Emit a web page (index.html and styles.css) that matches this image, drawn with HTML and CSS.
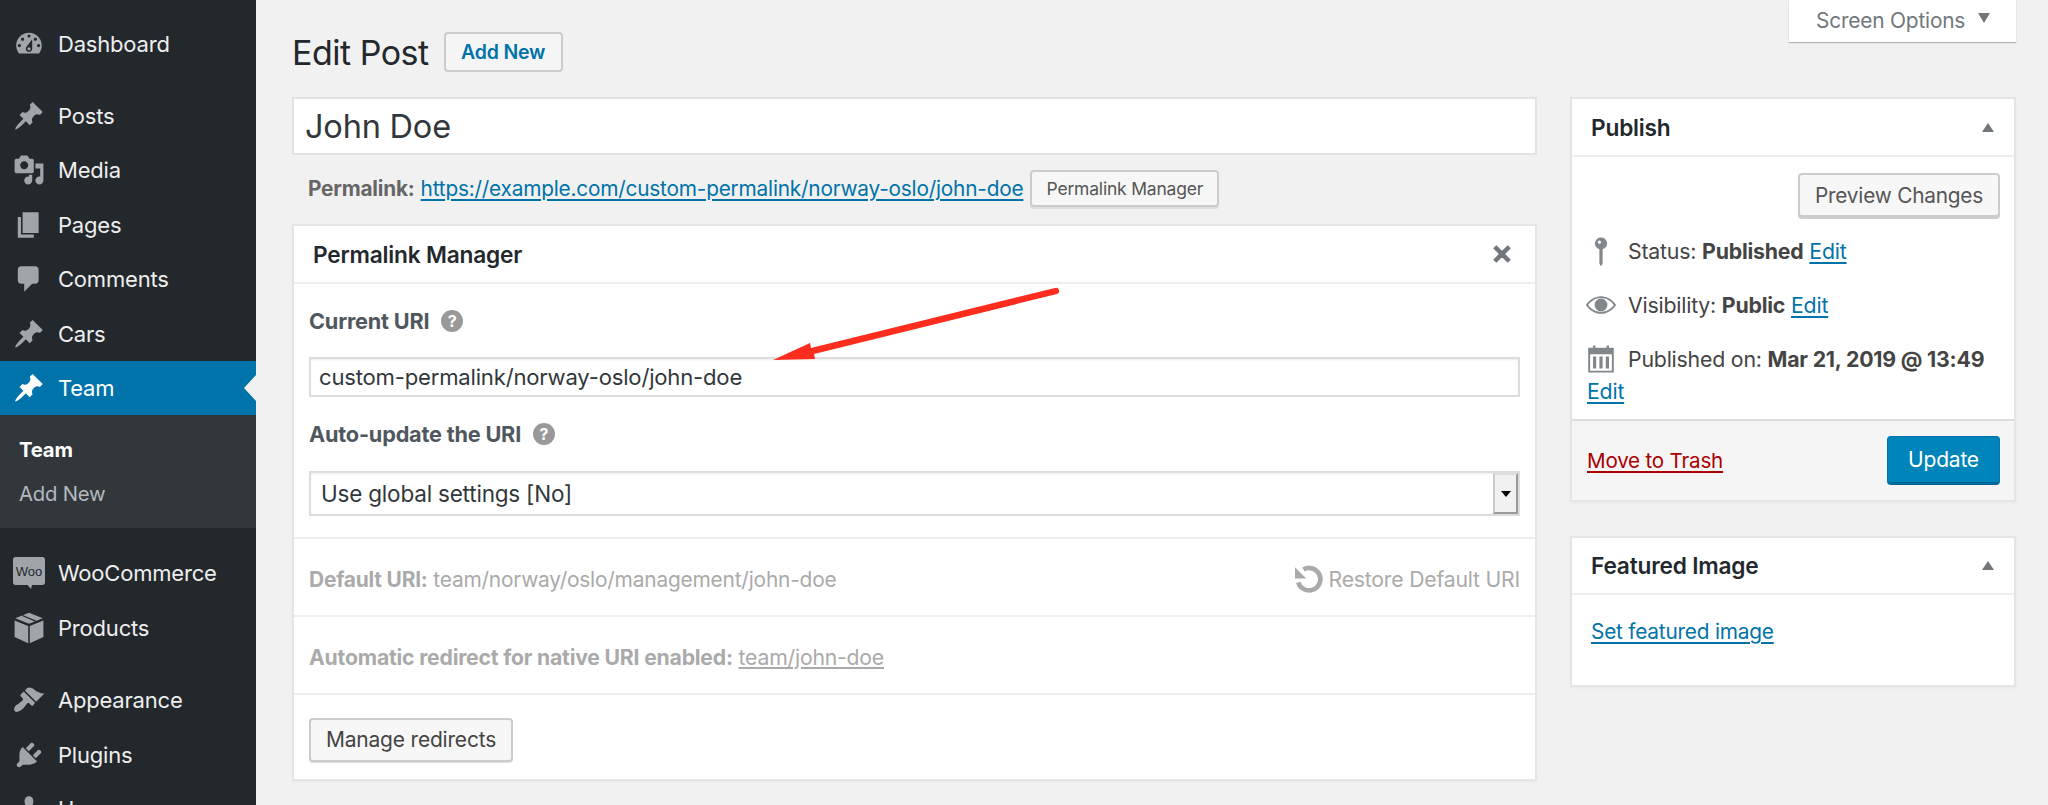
FILE: index.html
```html
<!DOCTYPE html>
<html lang="en">
<head>
<meta charset="utf-8">
<title>Edit Post</title>
<link rel="stylesheet" href="styles.css">
</head>
<body>
<div class="shell">
  <nav class="sidebar">
    <a class="item"><span class="ic"><svg viewBox="0 0 20 20"><path fill-rule="evenodd" d="M3.76 16h12.48c1.1-1.37 1.76-3.11 1.76-5 0-4.42-3.58-8-8-8s-8 3.58-8 8c0 1.89.66 3.63 1.76 5zM10 4c.55 0 1 .45 1 1s-.45 1-1 1-1-.45-1-1 .45-1 1-1zM6 6c.55 0 1 .45 1 1s-.45 1-1 1-1-.45-1-1 .45-1 1-1zm8 0c.55 0 1 .45 1 1s-.45 1-1 1-1-.45-1-1 .45-1 1-1zm-5.37 5.55L12 7v6c0 1.1-.9 2-2 2s-2-.9-2-2c0-.57.24-1.08.63-1.45zM4 10c.55 0 1 .45 1 1s-.45 1-1 1-1-.45-1-1 .45-1 1-1zm12 0c.55 0 1 .45 1 1s-.45 1-1 1-1-.45-1-1 .45-1 1-1zm-5 3c0-.55-.45-1-1-1s-1 .45-1 1 .45 1 1 1 1-.45 1-1z"/></svg></span>Dashboard</a>
    <div class="sep"></div>
    <a class="item"><span class="ic"><svg viewBox="0 0 20 20"><path d="M10.44 3.02l1.82-1.82 6.36 6.35-1.83 1.82c-1.05-.68-2.48-.57-3.41.36l-.75.75c-.92.93-1.04 2.35-.35 3.41l-1.83 1.82-2.41-2.41-2.8 2.79c-.42.42-3.38 2.71-3.8 2.29s1.86-3.39 2.28-3.81l2.79-2.79L4.1 9.36l1.83-1.82c1.05.69 2.48.57 3.4-.36l.75-.75c.93-.92 1.05-2.35.36-3.41z"/></svg></span>Posts</a>
    <a class="item"><span class="ic"><svg viewBox="0 0 20 20"><path fill-rule="evenodd" d="M13 11V4c0-.55-.45-1-1-1h-1.67L9 1H5L3.67 3H2c-.55 0-1 .45-1 1v7c0 .55.45 1 1 1h10c.55 0 1-.45 1-1zM7 4.5c1.38 0 2.5 1.12 2.5 2.5S8.38 9.5 7 9.5 4.5 8.38 4.5 7 5.62 4.5 7 4.5zM14 6h5v10.5c0 1.38-1.12 2.5-2.5 2.5S14 17.88 14 16.5s1.12-2.5 2.5-2.5c.17 0 .34.02.5.05V9h-3V6zm-4 8.05V13h2v3.5c0 1.38-1.12 2.5-2.5 2.5S7 17.88 7 16.5 8.12 14 9.5 14c.17 0 .34.02.5.05z"/></svg></span>Media</a>
    <a class="item"><span class="ic"><svg viewBox="0 0 20 20"><path d="M6 15V2h10v13H6zm-1 1h8v2H3V5h2v11z"/></svg></span>Pages</a>
    <a class="item"><span class="ic"><svg viewBox="0 0 20 20"><path d="M5 2h9c1.1 0 2 .9 2 2v7c0 1.1-.9 2-2 2h-2l-5 5v-5H5c-1.1 0-2-.9-2-2V4c0-1.1.9-2 2-2z"/></svg></span>Comments</a>
    <a class="item"><span class="ic"><svg viewBox="0 0 20 20"><path d="M10.44 3.02l1.82-1.82 6.36 6.35-1.83 1.82c-1.05-.68-2.48-.57-3.41.36l-.75.75c-.92.93-1.04 2.35-.35 3.41l-1.83 1.82-2.41-2.41-2.8 2.79c-.42.42-3.38 2.71-3.8 2.29s1.86-3.39 2.28-3.81l2.79-2.79L4.1 9.36l1.83-1.82c1.05.69 2.48.57 3.4-.36l.75-.75c.93-.92 1.05-2.35.36-3.41z"/></svg></span>Cars</a>
    <a class="item active"><span class="ic"><svg viewBox="0 0 20 20"><path d="M10.44 3.02l1.82-1.82 6.36 6.35-1.83 1.82c-1.05-.68-2.48-.57-3.41.36l-.75.75c-.92.93-1.04 2.35-.35 3.41l-1.83 1.82-2.41-2.41-2.8 2.79c-.42.42-3.38 2.71-3.8 2.29s1.86-3.39 2.28-3.81l2.79-2.79L4.1 9.36l1.83-1.82c1.05.69 2.48.57 3.4-.36l.75-.75c.93-.92 1.05-2.35.36-3.41z"/></svg></span>Team</a>
    <div class="submenu">
      <a class="subitem current">Team</a>
      <a class="subitem">Add New</a>
    </div>
    <div class="sep"></div>
    <a class="item"><span class="ic"><svg viewBox="0 0 32 32"><path d="M2.500 0h27c1.400 0 2.500 1.100 2.500 2.500v23c0 1.400-1.100 2.500-2.500 2.500H19l-1 4-3.500-4H2.500C1.100 28 0 26.900 0 25.500v-23C0 1.100 1.100 0 2.500 0z"/><text class="wootext" x="16" y="18.500" text-anchor="middle">Woo</text></svg></span>WooCommerce</a>
    <a class="item"><span class="ic"><svg viewBox="0 0 20 20"><path d="M10 .4l8.600 3.500L10 7.400 1.400 3.900z"/><path class="tape" d="M5.800 2.200l8.400 3.500"/><path d="M1 5.300l8.500 3.400V19.600L1 15.700zM19 5.300l-8.500 3.400V19.600l8.500-3.900z"/></svg></span>Products</a>
    <div class="sep"></div>
    <a class="item"><span class="ic"><svg viewBox="0 0 20 20"><path d="M14.480 11.060L7.410 3.990l1.500-1.500c.5-.56 2.300-.47 3.510.32 1.210.8 1.430 1.280 2.910 2.100 1.180.64 2.450 1.260 4.450.85zm-.71.71L6.700 4.700 4.930 6.470c-.39.39-.39 1.020 0 1.410l1.060 1.060c.39.39.39 1.030 0 1.420-.6.6-1.430 1.110-2.210 1.690-.35.26-.7.53-1.010.84C1.430 13.230 0 15.840 1.150 17c1.160 1.160 3.770-.27 5.140-1.610.31-.31.58-.66.84-1.010.58-.78 1.090-1.610 1.690-2.210.39-.39 1.030-.39 1.420 0l1.060 1.060c.39.39 1.020.39 1.410 0z"/></svg></span>Appearance</a>
    <a class="item"><span class="ic"><svg viewBox="0 0 20 20"><path d="M13.110 4.360L9.870 7.600 8 5.730l3.240-3.240c.35-.34 1.050-.2 1.560.32.520.51.660 1.210.310 1.550zm-8 1.770l.91-1.120 9.010 9.010-1.190.84c-.71.710-2.630 1.160-3.820 1.160H6.140L4.900 17.260c-.59.590-1.540.59-2.120 0-.59-.58-.59-1.530 0-2.120l1.240-1.240v-3.880c0-1.130.4-3.190 1.090-3.890zm7.260 3.970l3.240-3.240c.34-.35 1.040-.21 1.550.31.520.51.660 1.210.310 1.550l-3.240 3.250z"/></svg></span>Plugins</a>
    <a class="item"><span class="ic"><svg viewBox="0 0 20 20"><path d="M10 9.250c-2.270 0-2.730-3.440-2.730-3.440C7 4.020 7.820 2 9.970 2c2.160 0 2.980 2.020 2.710 3.810 0 0-.41 3.440-2.680 3.440zm0 2.570L12.720 10c2.390 0 4.520 2.330 4.520 4.530v2.490s-3.650 1.130-7.240 1.130c-3.650 0-7.240-1.130-7.240-1.130v-2.490c0-2.250 1.940-4.480 4.470-4.480z"/></svg></span>Users</a>
  </nav>

  <main class="content">
    <section class="col-main">
      <div class="head">
        <h1>Edit Post</h1>
        <a class="btn addnew">Add New</a>
      </div>
      <div class="title">John Doe</div>
      <div class="permalink">
        <strong>Permalink:</strong>
        <a class="link">https://example.com/custom-permalink/norway-oslo/john-doe</a>
        <a class="btn pmbtn">Permalink Manager</a>
      </div>
      <div class="box manager">
        <div class="box-head">
          <h2>Permalink Manager</h2>
          <svg class="close" viewBox="0 0 20 20"><path d="M14.950 6.460L11.410 10l3.540 3.540-1.410 1.410L10 11.420l-3.530 3.530-1.420-1.420L8.580 10 5.050 6.470l1.420-1.420L10 8.580l3.540-3.530z"/></svg>
        </div>
        <div class="fields">
          <div class="label">Current URI <span class="help">?</span></div>
          <div class="field">custom-permalink/norway-oslo/john-doe</div>
          <div class="label second">Auto-update the URI <span class="help">?</span></div>
          <div class="field select">
            <span class="select-text">Use global settings [No]</span>
            <span class="select-btn"><i class="caret"></i></span>
          </div>
        </div>
        <div class="row faded spread">
          <span><b>Default URI:</b> team/norway/oslo/management/john-doe</span>
          <span class="restore"><svg viewBox="0 0 32 32"><path class="ring" d="M9 5.800A12 12 0 1 1 3.500 19.500"/><path class="head-tri" d="M0 3.500V15.500H12z"/></svg>Restore Default URI</span>
        </div>
        <div class="row faded">
          <span><b>Automatic redirect for native URI enabled:</b> <u>team/john-doe</u></span>
        </div>
        <div class="row last">
          <a class="btn manage">Manage redirects</a>
        </div>
      </div>
    </section>

    <aside class="col-side">
      <div class="screen-tab">Screen Options <i class="tab-caret"></i></div>
      <div class="box publish">
        <div class="box-head side">
          <h2>Publish</h2>
          <i class="toggle"></i>
        </div>
        <div class="actions"><a class="btn preview">Preview Changes</a></div>
        <div class="meta">
          <span class="mi"><svg viewBox="0 0 20 20"><path d="M10 1.500a3.800 3.800 0 0 1 1 7.470V18l-1 1.500L9 18V8.970A3.800 3.800 0 0 1 10 1.500zM9 3.500a1 1 0 1 0 0 2 1 1 0 0 0 0-2z" fill-rule="evenodd"/></svg></span>Status: <b>Published</b> <a class="link">Edit</a>
        </div>
        <div class="meta">
          <span class="mi"><svg viewBox="0 0 20 20"><path fill-rule="evenodd" d="M10 4.500c4 0 7.300 2.300 9.500 5.500-2.200 3.200-5.500 5.500-9.500 5.500S2.700 13.200.5 10C2.700 6.800 6 4.500 10 4.500zM10 5.700c-3.300 0-6.100 1.800-8 4.300 1.900 2.500 4.700 4.300 8 4.300s6.100-1.800 8-4.300c-1.900-2.500-4.700-4.300-8-4.300zM10 6a4 4 0 1 1 0 8 4 4 0 0 1 0-8z"/></svg></span>Visibility: <b>Public</b> <a class="link">Edit</a>
        </div>
        <div class="meta">
          <span class="mi"><svg viewBox="0 0 20 20"><path fill-rule="evenodd" d="M5 1.500h1.500V3h7V1.500H15V3h3v15.500H2V3h3zM3.200 7v10.300h13.600V7zM5 8.500h2V16H5zM9 8.500h2V16H9zM13 8.500h2V16h-2z"/></svg></span>Published on: <b>Mar 21, 2019 @ 13:49</b> <a class="link">Edit</a>
        </div>
        <div class="pub-foot">
          <a class="trash">Move to Trash</a>
          <a class="btn primary">Update</a>
        </div>
      </div>
      <div class="box featured">
        <div class="box-head side short">
          <h2>Featured Image</h2>
          <i class="toggle"></i>
        </div>
        <div class="feat-body"><a class="link">Set featured image</a></div>
      </div>
    </aside>
  </main>
</div>
<svg class="arrow" viewBox="0 0 2048 805"><path d="M773 360L810 343L811 348L1055 288a3 3 0 0 1 2 6L814 354L815 359Z"/></svg>
</body>
</html>
```
FILE: styles.css
```css
* { box-sizing: border-box; }
html, body { margin: 0; height: 100%; overflow: hidden; }
body {
  background: #f1f1f1;
  color: #444;
  font-family: Inter, "Liberation Sans", sans-serif;
  font-size: 20.900px;
  letter-spacing: -0.2px;
}
a { color: inherit; text-decoration: none; }
h1, h2 { margin: 0; }

.shell { display: flex; height: 805px; }

/* Sidebar */
.sidebar {
  width: 256px;
  flex: none;
  height: 805px;
  overflow: hidden;
  padding-top: 16.500px;
  background: #23282d;
  color: #eee;
  font-size: 22px;
}
.item {
  position: relative;
  display: flex;
  align-items: center;
  height: 54.400px;
}
.ic {
  width: 58px;
  flex: none;
  display: flex;
  justify-content: center;
}
.ic svg { width: 32px; height: 32px; fill: #a0a5aa; display: block; }
.wootext { font: 400 13px "Liberation Sans", sans-serif; fill: #23282d; letter-spacing: 0; }
.tape { fill: none; stroke: #23282d; stroke-width: .8; }
.sep { height: 18px; }
.active { background: #0073aa; color: #fff; }
.active .ic svg { fill: #fff; }
.active::after {
  content: "";
  position: absolute;
  right: 0;
  top: 50%;
  margin-top: -13px;
  border: 13px solid transparent;
  border-left: 0;
  border-right: 12px solid #f1f1f1;
}
.submenu {
  background: #32373c;
  height: 113px;
  padding-top: 12px;
}
.subitem {
  display: flex;
  align-items: center;
  height: 44px;
  padding-left: 19px;
  font-size: 20.300px;
  color: #b4b9be;
}
.current { color: #fff; font-weight: 700; }

/* Main layout */
.content {
  flex: 1;
  display: flex;
  gap: 33px;
  padding: 0 32px 0 36px;
}
.col-main { width: 1245px; flex: none; }
.col-side { width: 446px; flex: none; }

.head {
  display: flex;
  align-items: center;
  height: 97px;
  padding-top: 32px;
  padding-bottom: 25px;
  gap: 15px;
}
h1 {
  font-size: 34px;
  font-weight: 400;
  color: #23282d;
  letter-spacing: -0.5px;
}
.btn {
  display: inline-flex;
  align-items: center;
  justify-content: center;
  background: #f7f7f7;
  border: 2px solid #ccc;
  border-radius: 4px;
  color: #555;
}
.addnew {
  width: 119px;
  height: 40px;
  font-size: 19.500px;
  font-weight: 600;
  color: #0073aa;
  background: #f5f5f5;
}
.title {
  height: 58px;
  display: flex;
  align-items: center;
  padding-left: 11px;
  background: #fff;
  border: 2px solid #e2e2e2;
  font-size: 32.500px;
  color: #32373c;
}
.permalink {
  display: flex;
  align-items: center;
  height: 37px;
  margin-top: 15px;
  padding-left: 16px;
  color: #666;
  gap: 6px;
  font-size: 20.800px;
}
.link { color: #0073aa; text-decoration: underline; text-underline-offset: 3px; }
.pmbtn {
  width: 189px;
  height: 37px;
  font-size: 17.500px;
  margin-left: 1px;
  box-shadow: 0 2px 0 #ddd;
}

/* Boxes */
.box {
  background: #fff;
  border: 2px solid #e5e5e5;
  box-shadow: 0 1px 2px rgba(0, 0, 0, .04);
}
.manager { height: 557px; margin-top: 17px; }
.box-head {
  display: flex;
  align-items: center;
  justify-content: space-between;
  height: 58px;
  padding: 0 22px 0 19px;
  border-bottom: 2px solid #eee;
  color: #23282d;
}
.box-head h2 { font-size: 22.700px; font-weight: 600; }
.close { width: 32px; height: 32px; fill: #72777c; margin-right: -5px; stroke: #72777c; stroke-width: .8; }
.fields { padding: 17px 15px 0; height: 253px; }
.label {
  display: flex;
  align-items: center;
  gap: 12px;
  height: 40px;
  font-weight: 700;
  color: #50575e;
  font-size: 21.700px;
}
.second { margin-top: 17px; }
.help {
  width: 22px;
  height: 22px;
  border-radius: 50%;
  background: #999;
  color: #fff;
  display: flex;
  align-items: center;
  justify-content: center;
  font-size: 16px;
  letter-spacing: 0;
}
.field {
  display: flex;
  align-items: center;
  height: 40px;
  margin-top: 16px;
  padding-left: 8px;
  border: 2px solid #ddd;
  background: #fff;
  color: #32373c;
  font-size: 22.100px;
  box-shadow: inset 0 1px 2px rgba(0, 0, 0, .07);
}
.select {
  height: 45px;
  margin-top: 17px;
  padding-left: 10px;
  padding-right: 0;
  justify-content: space-between;
  font-size: 22.500px;
}
.select-btn {
  width: 25px;
  height: 41px;
  display: flex;
  align-items: center;
  justify-content: center;
  background: #f1f1f1;
  border: 2px solid;
  border-color: #ddd #999 #999 #ccc;
}
.caret {
  border: 5px solid transparent;
  border-bottom: 0;
  border-top: 6px solid #000;
}
.row {
  display: flex;
  align-items: center;
  height: 78px;
  padding: 4px 15px 0;
  border-top: 2px solid #eee;
  font-size: 21.200px;
}
.spread { justify-content: space-between; font-size: 20.900px; }
.faded { color: #aaa; }
.faded b { font-weight: 700; }
.restore { display: flex; align-items: center; gap: 4px; font-size: 21.200px; }
.restore svg { width: 30px; height: 30px; flex: none; }
.ring { fill: none; stroke: #aaa; stroke-width: 5; }
.head-tri { fill: #aaa; }
.last { height: 88px; padding-top: 3px; }
.manage { width: 204px; height: 44px; font-size: 21px; color: #444; box-shadow: 0 1px 0 #ddd; }

/* Right column */
.screen-tab {
  position: relative;
  width: 227px;
  height: 42px;
  margin-left: auto;
  margin-bottom: 55px;
  padding: 0 0 2px 27px;
  display: flex;
  align-items: center;
  background: #fff;
  color: #72777c;
  box-shadow: 0 1px 1px rgba(0, 0, 0, .25);
}
.tab-caret {
  margin: -4px 0 0 13px;
  border: 6.500px solid transparent;
  border-bottom: 0;
  border-top: 10px solid #72777c;
}
.side { padding: 0 20px 0 19px; }
.toggle {
  border: 6.500px solid transparent;
  border-top: 0;
  border-bottom: 9px solid #72777c;
}
.actions { display: flex; justify-content: flex-end; padding: 16px 14px 0 0; }
.preview { width: 202px; height: 44px; font-size: 20.800px; box-shadow: 0 2px 0 #ccc; }
.meta {
  margin-top: 22px;
  padding-left: 15px;
  line-height: 32px;
  font-size: 21.300px;
  color: #444;
}
.actions + .meta { margin-top: 18px; }
.mi {
  display: inline-flex;
  width: 41px;
  height: 32px;
  vertical-align: top;
  padding-right: 13px;
  justify-content: center;
}
.mi svg { width: 32px; height: 32px; fill: #82878c; flex: none; }
.meta b { font-weight: 700; }
.pub-foot {
  display: flex;
  align-items: center;
  justify-content: space-between;
  height: 81px;
  margin-top: 12px;
  padding: 0 14px 0 15px;
  background: #f5f5f5;
  border-top: 2px solid #ddd;
}
.trash { color: #a00; text-decoration: underline; text-underline-offset: 3px; font-size: 20.600px; }
.primary {
  width: 113px;
  height: 49px;
  background: #0085ba;
  border: 1px solid #0073aa;
  border-bottom: 3px solid #006799;
  color: #fff;
  font-size: 21px;
}
.featured { height: 151px; margin-top: 34px; }
.short { height: 57px; }
.feat-body { padding: 21px 18px 0 19px; line-height: 32px; font-size: 20.800px; }

/* Annotation arrow over the page */
.arrow {
  position: absolute;
  left: 0;
  top: 0;
  width: 2048px;
  height: 805px;
  pointer-events: none;
  fill: #ff2d1e;
}
```
